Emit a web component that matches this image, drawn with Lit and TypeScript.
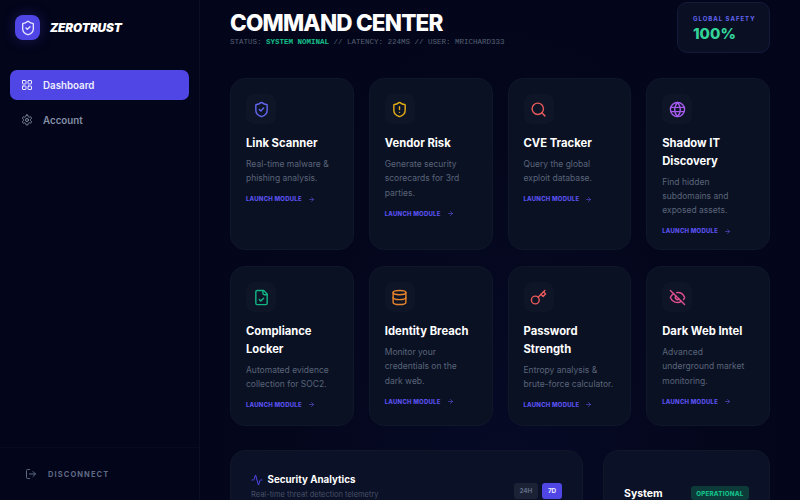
import { LitElement, html, css, svg } from "lit";
import { customElement } from "lit/decorators.js";

const P = {
  shield: svg`<path d="M20 13c0 5-3.5 7.5-7.66 8.95a1 1 0 0 1-.67-.01C7.5 20.5 4 18 4 13V6a1 1 0 0 1 1-1c2 0 4.5-1.2 6.24-2.72a1.17 1.17 0 0 1 1.52 0C14.51 3.81 17 5 19 5a1 1 0 0 1 1 1z"/>`,
};
const icons: Record<string, any> = {
  shieldCheck: svg`${P.shield}<path d="m9 12 2 2 4-4"/>`,
  shieldAlert: svg`${P.shield}<path d="M12 8v4"/><path d="M12 16h.01"/>`,
  search: svg`<circle cx="11" cy="11" r="8"/><path d="m21 21-4.3-4.3"/>`,
  globe: svg`<circle cx="12" cy="12" r="10"/><path d="M12 2a14.5 14.5 0 0 0 0 20 14.5 14.5 0 0 0 0-20"/><path d="M3 9h18"/><path d="M3 15h18"/>`,
  fileCheck: svg`<path d="M15 2H6a2 2 0 0 0-2 2v16a2 2 0 0 0 2 2h12a2 2 0 0 0 2-2V7Z"/><path d="M14 2v4a2 2 0 0 0 2 2h4"/><path d="m9 15 2 2 4-4"/>`,
  database: svg`<ellipse cx="12" cy="5" rx="9" ry="3"/><path d="M3 5V19A9 3 0 0 0 21 19V5"/><path d="M3 12A9 3 0 0 0 21 12"/>`,
  key: svg`<circle cx="7.5" cy="15.5" r="5.5"/><path d="m21 2-9.6 9.6"/><path d="m15.5 7.5 3 3L22 7l-3-3"/>`,
  eyeOff: svg`<path d="M10.733 5.076a10.744 10.744 0 0 1 11.205 6.575 1 1 0 0 1 0 .696 10.747 10.747 0 0 1-1.444 2.49"/><path d="M14.084 14.158a3 3 0 0 1-4.242-4.242"/><path d="M17.479 17.499a10.75 10.75 0 0 1-15.417-5.151 1 1 0 0 1 0-.696 10.75 10.75 0 0 1 4.446-5.143"/><path d="m2 2 20 20"/>`,
  activity: svg`<path d="M22 12h-2.48a2 2 0 0 0-1.93 1.46l-2.35 8.36a.25.25 0 0 1-.48 0L9.24 2.18a.25.25 0 0 0-.48 0l-2.35 8.36A2 2 0 0 1 4.49 12H2"/>`,
  grid: svg`<rect width="7" height="7" x="3" y="3" rx="1"/><rect width="7" height="7" x="14" y="3" rx="1"/><rect width="7" height="7" x="14" y="14" rx="1"/><rect width="7" height="7" x="3" y="14" rx="1"/>`,
  settings: svg`<path d="M12.22 2h-.44a2 2 0 0 0-2 2v.18a2 2 0 0 1-1 1.73l-.43.25a2 2 0 0 1-2 0l-.15-.08a2 2 0 0 0-2.73.73l-.22.38a2 2 0 0 0 .73 2.73l.15.1a2 2 0 0 1 1 1.72v.51a2 2 0 0 1-1 1.74l-.15.09a2 2 0 0 0-.73 2.73l.22.38a2 2 0 0 0 2.73.73l.15-.08a2 2 0 0 1 2 0l.43.25a2 2 0 0 1 1 1.73V20a2 2 0 0 0 2 2h.44a2 2 0 0 0 2-2v-.18a2 2 0 0 1 1-1.73l.43-.25a2 2 0 0 1 2 0l.15.08a2 2 0 0 0 2.73-.73l.22-.39a2 2 0 0 0-.73-2.73l-.15-.08a2 2 0 0 1-1-1.74v-.5a2 2 0 0 1 1-1.74l.15-.09a2 2 0 0 0 .73-2.73l-.22-.38a2 2 0 0 0-2.73-.73l-.15.08a2 2 0 0 1-2 0l-.43-.25a2 2 0 0 1-1-1.73V4a2 2 0 0 0-2-2z"/><circle cx="12" cy="12" r="3"/>`,
  logout: svg`<path d="M9 21H5a2 2 0 0 1-2-2V5a2 2 0 0 1 2-2h4"/><path d="m16 17 5-5-5-5"/><path d="M21 12H9"/>`,
  arrow: svg`<path d="M5 12h14"/><path d="m12 5 7 7-7 7"/>`,
};
const ic = (n: string, cls = "") =>
  html`<svg class=${cls} viewBox="0 0 24 24" fill="none" stroke="currentColor" stroke-width="2" stroke-linecap="round" stroke-linejoin="round">${icons[n]}</svg>`;

const row1 = [
  ["shieldCheck", "c-indigo", "Link Scanner", "Real-time malware & phishing analysis."],
  ["shieldAlert", "c-amber", "Vendor Risk", "Generate security scorecards for 3rd parties."],
  ["search", "c-red", "CVE Tracker", "Query the global exploit database."],
  ["globe", "c-purple", "Shadow IT Discovery", "Find hidden subdomains and exposed assets."],
];
const row2 = [
  ["fileCheck", "c-green", "Compliance Locker", "Automated evidence collection for SOC2."],
  ["database", "c-orange", "Identity Breach", "Monitor your credentials on the dark web."],
  ["key", "c-red", "Password Strength", "Entropy analysis & brute-force calculator."],
  ["eyeOff", "c-pink", "Dark Web Intel", "Advanced underground market monitoring."],
];

@customElement("app-root")
export class AppRoot extends LitElement {
  static styles = css`
    :host { display: block; width: 800px; height: 500px; overflow: hidden; font-family: Inter, "Noto Sans", sans-serif; background: #020617; }
    * { box-sizing: border-box; }
    svg { display: block; flex: none; }
    .shell { display: flex; width: 800px; height: 500px; overflow: hidden; }
    .side { width: 200px; flex: none; height: 500px; display: flex; flex-direction: column; background: #03051a; border-right: 1px solid #0a0e24; }
    .brand { display: flex; gap: 10px; padding: 15px 15px 0; height: 70px; align-items: flex-start; }
    .logo { width: 25px; height: 25px; border-radius: 8px; background: #4f46e5; color: #e8e8ff; display: flex; align-items: center; justify-content: center; box-shadow: 0 0 14px rgba(79,70,229,.3); }
    .logo svg { width: 16px; height: 16px; }
    .brand-name { font-size: 11.8px; font-weight: 900; font-style: italic; color: #fff; line-height: 27px; letter-spacing: -0.1px; }
    nav { display: flex; flex-direction: column; gap: 5px; padding: 0 10px; flex: 1; }
    .nav { height: 30px; display: flex; align-items: center; gap: 10px; padding: 0 11px; border-radius: 7px; font-size: 9.75px; font-weight: 600; color: #8490a6; }
    .nav svg { width: 12px; height: 12px; }
    .nav.on { background: #4f46e5; color: #eef; }
    .foot { height: 53px; border-top: 1px solid #080b20; padding: 0 25px; display: flex; align-items: center; gap: 11px; color: #5f6a85; font-size: 7.5px; font-weight: 700; letter-spacing: 1.1px; }
    .foot svg { width: 12px; height: 12px; }
    main { flex: 1; min-width: 0; height: 500px; overflow: hidden; padding: 0 30px; background: radial-gradient(ellipse at 50% 100%, #060a26 0%, #04071c 50%, #03051a 100%); }
    header { display: flex; justify-content: space-between; align-items: flex-start; height: 78px; padding-top: 2px; }
    .title { font-size: 22.5px; font-weight: 800; color: #fff; line-height: 28px; margin-top: 7px; letter-spacing: -0.8px; }
    .status { font-family: "Liberation Mono", monospace; font-size: 7.5px; color: #566074; line-height: 10px; }
    .status b { color: #17c08a; font-weight: 700; }
    .safety { width: 93px; height: 51px; border-radius: 10px; background: #0a0f24; border: 1px solid #141a38; padding: 12px 15px; }
    .safety-l { font-size: 6px; font-weight: 700; letter-spacing: 1px; color: #6366f1; line-height: 8px; white-space: nowrap; }
    .safety-v { font-size: 15px; font-weight: 800; color: #34d399; line-height: 19px; margin-top: 1px; }
    .grid { display: grid; grid-template-columns: repeat(4, 1fr); gap: 15px; }
    .row2 { margin-top: 16px; }
    .row1 .card { height: 172px; }
    .row2 .card { height: 160px; }
    .card { border-radius: 15px; background: #0a1123; border: 1px solid #10172b; padding: 15px; }
    .ib { width: 30px; height: 30px; border-radius: 8px; background: #0d1527; display: flex; align-items: center; justify-content: center; margin-bottom: 11px; }
    .ib svg { width: 17px; height: 17px; }
    .c-indigo { color: #6366f1; } .c-amber { color: #e5ab14; } .c-red { color: #e85a5a; } .c-purple { color: #a75cf0; }
    .c-green { color: #14b585; } .c-orange { color: #e8842c; } .c-pink { color: #e0508f; }
    h3 { margin: 0 0 4.5px; font-size: 11.25px; font-weight: 700; color: #fff; line-height: 17.5px; }
    p { margin: 0 0 8.5px; font-size: 8.5px; line-height: 14.4px; color: #5a6479; }
    .launch { display: flex; align-items: center; gap: 6px; font-size: 6px; font-weight: 800; color: #5850ec; letter-spacing: .2px; line-height: 10px; }
    .launch svg { width: 7px; height: 7px; color: #5b54e8; }
    .bottom { display: grid; grid-template-columns: 353px 167px; gap: 20px; margin-top: 24px; }
    .panel { height: 100px; border-radius: 15px; background: #0b1126; border: 1px solid #111729; padding: 20px; }
    .an { display: flex; justify-content: space-between; align-items: flex-start; }
    .an-t { display: flex; align-items: center; gap: 4.5px; font-size: 9.75px; font-weight: 700; color: #fff; line-height: 15px; margin-top: 1px; }
    .an-t svg { width: 12px; height: 12px; color: #4f46e5; }
    .an-s { font-size: 7.5px; color: #475068; line-height: 11px; margin-top: 2px; }
    .seg { display: flex; gap: 4px; margin-top: 12px; }
    .seg span { height: 16px; border-radius: 3px; padding: 0 5.75px; font-size: 6.4px; font-weight: 700; line-height: 16px; background: #1b2236; color: #5f6a82; }
    .seg .on { background: #4f46e5; color: #eef; }
    .sys { display: flex; justify-content: space-between; align-items: flex-start; }
    .sys-t { font-size: 10.5px; font-weight: 700; color: #fff; line-height: 15px; margin-top: 15px; }
    .badge { height: 14px; margin-top: 15px; border-radius: 3px; background: #0c3b3a; color: #14c088; padding: 0 5.5px; font-size: 6.2px; font-weight: 800; letter-spacing: .25px; line-height: 15px; }
  `;

  card(c: string[]) {
    return html`<div class="card">
      <div class="ib ${c[1]}">${ic(c[0])}</div>
      <h3>${c[2]}</h3>
      <p>${c[3]}</p>
      <div class="launch">LAUNCH MODULE ${ic("arrow")}</div>
    </div>`;
  }

  render() {
    return html`<div class="shell">
      <aside class="side">
        <div class="brand">
          <div class="logo">${ic("shieldCheck")}</div>
          <div class="brand-name">ZEROTRUST</div>
        </div>
        <nav>
          <div class="nav on">${ic("grid")}Dashboard</div>
          <div class="nav">${ic("settings")}Account</div>
        </nav>
        <div class="foot">${ic("logout")}DISCONNECT</div>
      </aside>
      <main>
        <header>
          <div>
            <div class="title">COMMAND CENTER</div>
            <div class="status">STATUS: <b>SYSTEM NOMINAL</b> // LATENCY: 224MS // USER: MRICHARD333</div>
          </div>
          <div class="safety">
            <div class="safety-l">GLOBAL SAFETY</div>
            <div class="safety-v">100%</div>
          </div>
        </header>
        <div class="grid row1">${row1.map((c) => this.card(c))}</div>
        <div class="grid row2">${row2.map((c) => this.card(c))}</div>
        <div class="bottom">
          <div class="panel an">
            <div>
              <div class="an-t">${ic("activity")}Security Analytics</div>
              <div class="an-s">Real-time threat detection telemetry</div>
            </div>
            <div class="seg"><span>24H</span><span class="on">7D</span></div>
          </div>
          <div class="panel sys">
            <div class="sys-t">System</div>
            <div class="badge">OPERATIONAL</div>
          </div>
        </div>
      </main>
    </div>`;
  }
}
